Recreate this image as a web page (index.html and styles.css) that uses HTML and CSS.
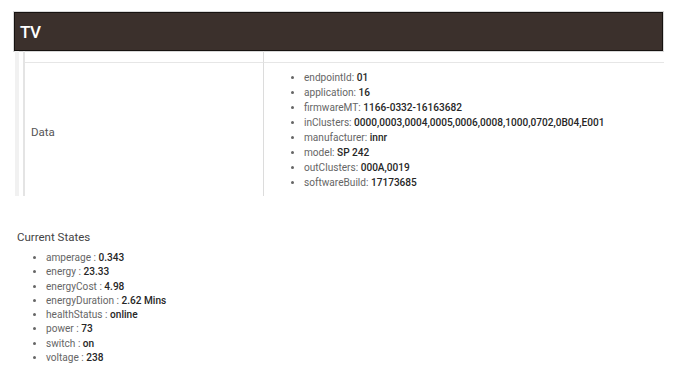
FILE: index.html
```html
<!DOCTYPE html>
<html>
<head>
<meta charset="utf-8">
<link rel="stylesheet" href="styles.css">
</head>
<body>
<div class="page">
  <header class="bar"><span class="bar-title">TV</span></header>
  <div class="edge">
    <div class="tbl">
      <div class="cell c1 cut"></div>
      <div class="cell c2 cut"></div>
      <div class="cell c1 data-label">Data</div>
      <div class="cell c2 data-val">
        <ul class="kv">
          <li>endpointId: <b>01</b></li>
          <li>application: <b>16</b></li>
          <li>firmwareMT: <b>1166-0332-16163682</b></li>
          <li>inClusters: <b>0000,0003,0004,0005,0006,0008,1000,0702,0B04,E001</b></li>
          <li>manufacturer: <b>innr</b></li>
          <li>model: <b>SP 242</b></li>
          <li>outClusters: <b>000A,0019</b></li>
          <li>softwareBuild: <b>17173685</b></li>
        </ul>
      </div>
    </div>
  </div>
  <section class="states">
    <h3 class="states-title">Current States</h3>
    <ul class="kv states-list">
      <li>amperage : <b>0.343</b></li>
      <li>energy : <b>23.33</b></li>
      <li>energyCost : <b>4.98</b></li>
      <li>energyDuration : <b>2.62 Mins</b></li>
      <li>healthStatus : <b>online</b></li>
      <li>power : <b>73</b></li>
      <li>switch : <b>on</b></li>
      <li>voltage : <b>238</b></li>
    </ul>
  </section>
</div>
</body>
</html>
```
FILE: styles.css
```css
* { box-sizing: border-box; }
html, body { margin: 0; padding: 0; background: #fff; }
body {
  font-family: Roboto, "Liberation Sans", sans-serif;
  color: #616161;
  width: 690px;
  height: 388px;
  overflow: hidden;
}
.page { padding-top: 12px; }

.bar {
  margin-left: 14px;
  width: 649px;
  height: 39px;
  background: #3b302c;
  border: 1px solid #161210;
  box-shadow: 0 0 0 1px #d8d8d8;
  display: flex;
  align-items: center;
  padding-left: 5px;
}
.bar-title {
  color: #fff;
  font-size: 17px;
  font-weight: 500;
  letter-spacing: -0.5px;
  margin-top: 1px;
}

.edge {
  margin-left: 15px;
  border-left: 4px solid #f1f1f1;
  padding-left: 4px;
  width: 648px;
}
.tbl {
  display: grid;
  grid-template-columns: 238px 401px;
  grid-template-rows: 12px 133px;
  border-left: 2px solid #e4e4e4;
}
.cell { font-size: 11.5px; }
.c2 { border-left: 1px solid #dcdcdc; }
.cut { border-bottom: 1px solid #e6e6e6; }
.data-label {
  display: flex;
  align-items: center;
  padding-left: 6px;
  padding-top: 5px;
  color: #555;
}
.data-val { padding-top: 7px; }

.kv {
  margin: 0;
  padding-left: 40px;
  font-size: 10.1px;
  line-height: 15px;
  list-style: disc;
  color: #666;
}
.kv b { color: #262626; font-weight: 500; }

.states { padding-left: 17px; padding-top: 33px; }
.states-title {
  margin: 0;
  font-size: 11.5px;
  font-weight: 400;
  line-height: 16px;
  color: #444;
}
.states-list {
  margin-top: 6px;
  padding-left: 29px;
  line-height: 14.3px;
}
```
